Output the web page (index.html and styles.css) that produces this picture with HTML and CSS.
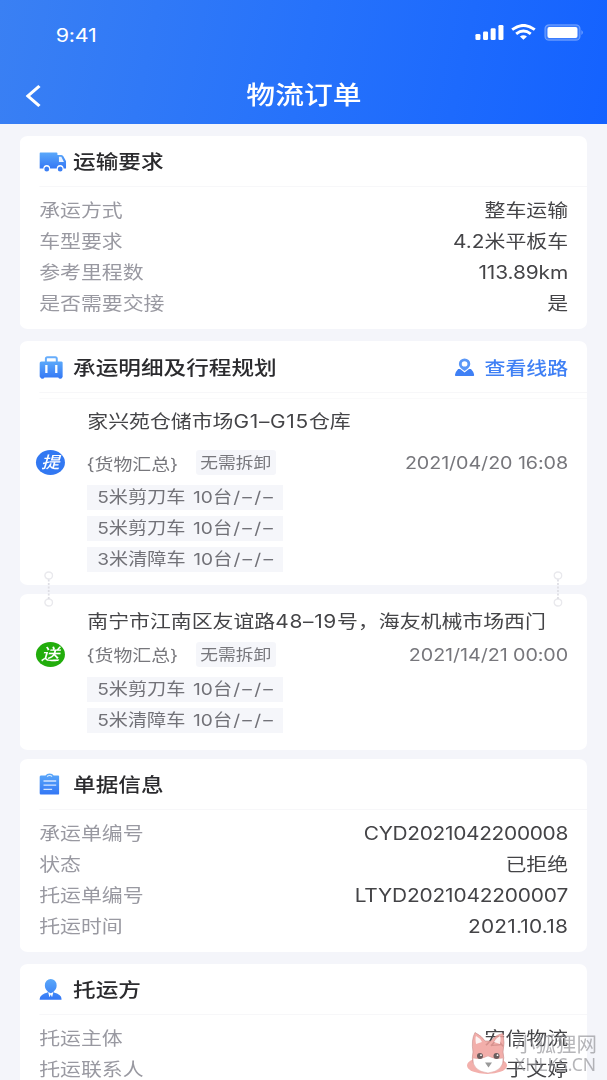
FILE: index.html
```html
<!DOCTYPE html>
<html lang="zh-CN">
<head>
<meta charset="utf-8">
<title>物流订单</title>
<link rel="stylesheet" href="styles.css">
</head>
<body>
<div class="screen">
  <header class="top">
    <div class="status">
      <span class="time">9:41</span>
      <svg class="status-icons" width="94" height="18" viewBox="0 0 109 18" preserveAspectRatio="none">
        <g fill="#fff">
          <rect x="1" y="10" width="5" height="6" rx="1.3"/><rect x="8.6" y="7.4" width="5" height="8.6" rx="1.3"/><rect x="16.200" y="4.300" width="5" height="11.700" rx="1.3"/><rect x="24" y="1" width="5" height="15" rx="1.300"/>
          <path d="M49 15.800l-3.500-3.200q3.500-2.600 7 0z"/>
        </g>
        <g fill="none" stroke="#fff" stroke-width="2.900">
          <path d="M37.700 5.700q11.300-8.600 22.600 0"/><path d="M41.700 9.800q7.300-5.600 14.600 0"/>
        </g>
        <rect x="70.500" y="0.800" width="35" height="15.400" rx="4" fill="#fff" fill-opacity=".15" stroke="#fff" stroke-opacity=".3" stroke-width="1.200"/>
        <rect x="73" y="3" width="30" height="11" rx="2" fill="#fff"/>
        <path d="M107 6q2.500 2.500 0 5z" fill="#fff" fill-opacity=".45"/>
      </svg>
    </div>
    <div class="nav">
      <svg class="back" width="14" height="24" viewBox="0 0 14 24"><path d="M12 2L2 12l10 10" fill="none" stroke="#fff" stroke-width="2.800"/></svg>
      <h1>物流订单</h1>
    </div>
  </header>

  <svg class="defs" width="0" height="0">
    <linearGradient id="blue" x1="0" y1="0" x2="0" y2="1"><stop offset="0" stop-color="#5aa8fa"/><stop offset="1" stop-color="#3477f5"/></linearGradient>
  </svg>

  <main class="cards">
    <section class="card">
      <div class="head">
        <svg class="icon" width="23.500" height="20" viewBox="0 0 28 20" preserveAspectRatio="none">
          <path fill="url(#blue)" d="M1 .5h16.500a1 1 0 0 1 1 1V3h4q1.500 0 2.200 1.500L27.500 9.500V16.500h-2.700a3.500 3.500 0 0 0-7 0H11a3.500 3.500 0 0 0-7 0H0V1.500q0-1 1-1z"/>
          <path fill="#e6f1ff" d="M20 4.800h2.500L25.200 10H20z"/>
          <circle cx="7.500" cy="16.900" r="2.500" fill="#3b7ff5"/><circle cx="21.300" cy="16.900" r="2.500" fill="#3b7ff5"/>
        </svg>
        <h2>运输要求</h2>
      </div>
      <dl class="rows">
        <div><dt>承运方式</dt><dd>整车运输</dd></div>
        <div><dt>车型要求</dt><dd>4.2米平板车</dd></div>
        <div><dt>参考里程数</dt><dd class="km">113.89km</dd></div>
        <div><dt>是否需要交接</dt><dd>是</dd></div>
      </dl>
    </section>

    <section class="card pickup">
      <div class="head">
        <svg class="icon" width="20.500" height="23" viewBox="0 0 24 23" preserveAspectRatio="none">
          <path d="M6.500 6V2.800Q6.500 1.200 8 1.200h8q1.500 0 1.500 1.600V6" fill="none" stroke="#67adfb" stroke-width="2"/>
          <path fill="url(#blue)" d="M2 5.500h20q2 0 2 2v12.300q0 1.700-1 1.700-.5 1.300-2 1.300T19 21.500H5q-.5 1.300-2 1.300T1 21.500Q0 21.500 0 19.800V7.500q0-2 2-2z"/>
          <path d="M7 9v8M17 9v8" stroke="#fff" stroke-width="2.300"/>
        </svg>
        <h2>承运明细及行程规划</h2>
        <a class="route">
          <svg width="17" height="18" viewBox="0 0 20 18" preserveAspectRatio="none">
            <path fill="#3f80f5" d="M3.500 11h2l4.500 3.500 4.500-3.500h2Q19.500 14 19.800 17q0 1-1 1H1.200q-1 0-1-1Q.5 14 3.500 11z"/>
            <path fill="#5a97f7" fill-rule="evenodd" d="M10 .500a5.800 5.500 0 0 1 5.800 5.500q0 3.500-5.800 7Q4.200 9.500 4.200 6A5.800 5.500 0 0 1 10 .5zm0 2.700a2.900 2.700 0 1 0 0 5.400 2.900 2.700 0 0 0 0-5.400z"/>
          </svg>查看线路</a>
      </div>
      <div class="stop">
        <p class="address">家兴苑仓储市场<span class="num">G1–G15</span>仓库</p>
        <div class="meta"><span class="badge">提</span><span class="goods">{货物汇总}</span><span class="tag">无需拆卸</span><time>2021/04/20 16:08</time></div>
        <ul class="chips"><li>5米剪刀车 10台<span class="blank">/–/–</span></li><li>5米剪刀车 10台<span class="blank">/–/–</span></li><li>3米清障车 10台<span class="blank">/–/–</span></li></ul>
      </div>
      <svg class="link left" width="8" height="36" viewBox="0 0 8 36"><g fill="#fff" stroke="#e9e9ed" stroke-width="1.300"><ellipse cx="4" cy="4.500" rx="3.300" ry="3.500"/><ellipse cx="4" cy="31.500" rx="3.300" ry="3.500"/></g><path d="M4 8.500v20" stroke="#dedee4" stroke-width="1.500" stroke-dasharray="2 1.500"/></svg>
      <svg class="link right" width="8" height="36" viewBox="0 0 8 36"><g fill="#fff" stroke="#e9e9ed" stroke-width="1.300"><ellipse cx="4" cy="4.500" rx="3.300" ry="3.500"/><ellipse cx="4" cy="31.500" rx="3.300" ry="3.500"/></g><path d="M4 8.500v20" stroke="#dedee4" stroke-width="1.500" stroke-dasharray="2 1.500"/></svg>
    </section>

    <section class="card dropoff">
      <div class="stop">
        <p class="address">南宁市江南区友谊路<span class="num">48–19</span>号，海友机械市场西门</p>
        <div class="meta"><span class="badge green">送</span><span class="goods">{货物汇总}</span><span class="tag">无需拆卸</span><time>2021/14/21 00:00</time></div>
        <ul class="chips"><li>5米剪刀车 10台<span class="blank">/–/–</span></li><li>5米清障车 10台<span class="blank">/–/–</span></li></ul>
      </div>
    </section>

    <section class="card bill">
      <div class="head">
        <svg class="icon" width="17.500" height="22" viewBox="0 0 20 22" preserveAspectRatio="none">
          <path fill="url(#blue)" d="M1.500 2.500H6Q7 .5 10 .5t4 2h4.500q1.500 0 1.500 1.500v16q0 1.500-1.500 1.500h-17Q0 21.500 0 20V4q0-1.500 1.500-1.500z"/>
          <path d="M7.500 3.500q2.500-2 5 0" stroke="#fff" stroke-opacity=".8" fill="none"/>
          <path d="M4 8h12.500M4 12.200h12.500M4 16.400h8.500" stroke="#d3e4ff" stroke-width="1.300"/>
        </svg>
        <h2>单据信息</h2>
      </div>
      <dl class="rows">
        <div><dt>承运单编号</dt><dd class="cyd">CYD2021042200008</dd></div>
        <div><dt>状态</dt><dd>已拒绝</dd></div>
        <div><dt>托运单编号</dt><dd class="ltyd">LTYD2021042200007</dd></div>
        <div><dt>托运时间</dt><dd class="date">2021.10.18</dd></div>
      </dl>
    </section>

    <section class="card shipper">
      <div class="head">
        <svg class="icon" width="19.500" height="21" viewBox="0 0 23 21" preserveAspectRatio="none">
          <path fill="url(#blue)" d="M11.500 0a6 6.300 0 0 1 6 6.300q0 4-3 6l.2 1.300Q22 15.500 23 20v.8H0V20q1-4.500 8.300-6.400l.2-1.300q-3-2-3-6A6 6.300 0 0 1 11.500 0z"/>
          <path fill="#fff" d="M8.800 13l2.700 1.200 2.700-1.200-1.400 5.200-1.300-2.600-1.300 2.600z"/>
        </svg>
        <h2>托运方</h2>
      </div>
      <dl class="rows">
        <div><dt>托运主体</dt><dd>宏信物流</dd></div>
        <div><dt>托运联系人</dt><dd>于文婷</dd></div>
      </dl>
    </section>
  </main>
</div>

<div class="watermark">
  <svg width="42" height="44" viewBox="0 0 42 44">
    <ellipse cx="20" cy="34.500" rx="20" ry="8.500" fill="#f3b0ac"/>
    <path d="M6 21Q4 9 8 1.500 15 5 18 10h6Q28 4 36 2.500 38 12 36 21q3 13-6 17-8 4-17 0Q3 34 6 21z" fill="#f0a09b" fill-opacity=".85" stroke="#c58d8b" stroke-width=".6"/>
    <path d="M9 13q-1-6 0-8 4 2 6 6zM33 13q1-6 0-8-4 2-6 6z" fill="#fff" fill-opacity=".85"/>
    <path d="M6 27q8 2 15-2 7 4 15 2 1 13-15 15Q5 40 6 27z" fill="#fff" stroke="#d9a5a3" stroke-width=".5"/>
    <circle cx="13" cy="25" r="3" fill="#6b5e5e"/><circle cx="29.500" cy="25" r="3" fill="#6b5e5e"/>
    <circle cx="14" cy="24.200" r=".9" fill="#fff"/><circle cx="30.500" cy="24.200" r=".9" fill="#fff"/>
    <path d="M18 31.500h7l-3.500 5z" fill="#999"/>
  </svg>
  <div class="mark-text"><span class="mark-cn">小狐狸网</span><span class="mark-en">XHLKS.CN</span></div>
</div>
</body>
</html>
```
FILE: styles.css
```css
* { box-sizing: border-box; margin: 0; padding: 0; }

html, body { width: 607px; height: 1080px; overflow: hidden; background: #f4f5fa; }

body { position: relative; font-family: Inter, "Noto Sans CJK SC", sans-serif; }

/* The layout is 523px wide and widened to fill the window. */
.screen {
  width: 524px;
  height: 1080px;
  overflow: hidden;
  transform: scaleX(1.16);
  transform-origin: 0 0;
  font-size: 18px;
  color: #444447;
  white-space: nowrap;
}

.defs { display: block; height: 0; }

.top {
  height: 124px;
  color: #fff;
  background: linear-gradient(100deg, #3a80f3 0%, #2672fb 50%, #1462ff 100%);
}

.status { display: flex; justify-content: space-between; height: 66px; padding: 24px 20.700px 0 48px; }
.time { font-size: 18.500px; line-height: 23px; letter-spacing: -.2px; }

.nav { display: grid; grid-template-columns: 60px 1fr 60px; align-items: center; height: 58px; }
.back { margin: 2px 0 0 22px; }
.nav h1 { font-size: 24.800px; line-height: 30px; font-weight: 500; text-align: center; }

.cards { display: flex; flex-direction: column; padding: 12px 17.900px 0 17.200px; }
.card { border-radius: 7px; background: #fff; margin-bottom: 12px; }

.head { display: flex; align-items: center; height: 51px; padding-top: 2px; margin-left: 16.600px; border-bottom: 1px solid #f7f7f9; }
.icon { flex: none; }
.head h2 { font-size: 19.500px; line-height: 28px; font-weight: 500; color: #2b2b2e; }
.card .head .icon { margin-right: 5.700px; }
.route { display: flex; align-items: center; gap: 8.500px; margin: -1px 16.400px 0 auto; color: #3f80f5; font-weight: 500; }

.rows { padding: 8px 16.400px 9.500px 16.600px; }
.rows > div { display: flex; justify-content: space-between; line-height: 31px; height: 31px; }
.rows dt { color: #9999a1; }
.km { letter-spacing: -.1px; }
.cyd { letter-spacing: -.27px; }
.ltyd { letter-spacing: -.15px; }
.date { letter-spacing: .17px; }

.pickup { position: relative; height: 244px; margin-bottom: 9px; }
.pickup .head { height: 52px; padding-top: 3px; }
.pickup .head .icon { margin: -1px 8.700px 0 0; }
.pickup .stop { margin-left: 16.600px; padding-left: 41.500px; margin-top: 5px; border-top: 1px solid #fafafb; }
.stop { padding-right: 16.400px; }
.address { line-height: 26px; }
.address .num { letter-spacing: .6px; }
.pickup .address { margin-top: 10px; }
.meta { display: flex; align-items: center; height: 25px; margin: 15.500px 0 10px -44.500px; color: #77777c; }
.badge { width: 25px; height: 25px; border-radius: 50%; background: #3278f2; color: #fff; font-size: 16px; line-height: 24px; font-weight: 500; font-style: italic; text-align: center; margin-right: 18.800px; }
.badge.green { background: #22ad0c; }
.goods { font-size: 16.300px; width: 94px; }
.tag { width: 69.500px; height: 25px; border-radius: 3px; background: #f5f6fa; font-size: 15.300px; line-height: 25px; text-align: center; }
.meta time { margin-left: auto; padding-top: 1px; font-size: 17px; letter-spacing: -.07px; }
.chips { display: grid; gap: 6px; width: 168.500px; list-style: none; color: #727278; font-size: 16.500px; }
.chips li { height: 25px; line-height: 25px; padding-left: 8.500px; background: #f5f6fa; word-spacing: 2px; }
.blank { letter-spacing: 1.900px; padding-left: 1px; }

.link { position: absolute; top: 230.500px; z-index: 1; }
.link.left { left: 21.300px; }
.link.right { right: 21.500px; }

.dropoff { height: 156px; padding: 15px 0 0 58.100px; margin-bottom: 9px; }
.dropoff .meta { margin-top: 7px; }

.bill { height: 193px; margin-bottom: 12px; }
.bill .head { padding-top: 1px; }
.bill .head h2 { margin-top: 1px; }
.bill .head .icon { margin-right: 11.700px; }
.shipper .head .icon { margin-right: 9.700px; }

.watermark { position: absolute; left: 467px; top: 1031px; display: flex; gap: 6px; z-index: 2; }
.mark-text { display: flex; flex-direction: column; color: #8f8f94; opacity: .65; white-space: nowrap; }
.mark-cn { font-size: 20.500px; line-height: 27px; }
.mark-en { font-family: "Noto Sans", sans-serif; font-size: 17.500px; line-height: 13px; }
```
